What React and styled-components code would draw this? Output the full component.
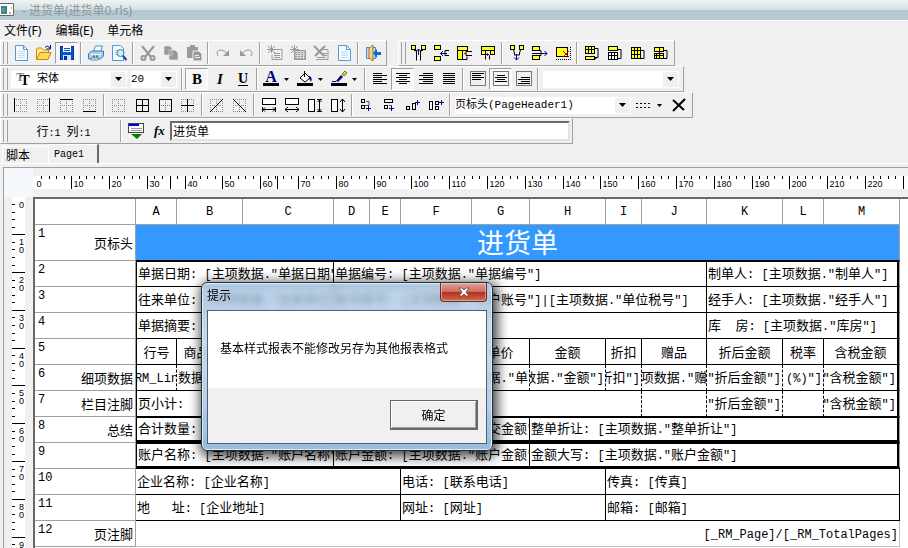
import React from "react";
import styled, { createGlobalStyle, css } from "styled-components";

const GlobalStyle = createGlobalStyle`
  * { box-sizing: border-box; }
  body {
    margin: 0;
    overflow: hidden;
    background: #f0f0f0;
    color: #000;
    font-family: "Noto Sans", "Noto Sans CJK SC", sans-serif;
    font-size: 12px;
  }
  button, select, input { font: inherit; color: inherit; }
`;

const MONO = `"Liberation Mono", "Noto Sans CJK SC", monospace`;
const MM = 3.7795;

// half-width characters sit on a narrower grid than the chinese ones
const Mixed = ({ children }) =>
  String(children)
    .split(/([\x20-\x7e]+)/)
    .map((part, i) => (i % 2 ? <Latin key={i}>{part}</Latin> : part));

const line = (d, color = "#000", w = 1) => (
  <path d={d} stroke={color} strokeWidth={w} fill="none" />
);
const rect = (x, y, w, h, fill = "none", stroke = "#000") => (
  <rect x={x + 0.5} y={y + 0.5} width={w - 1} height={h - 1} fill={fill} stroke={stroke} />
);

const dots = "M1.5 2v13M7.5 2v13M13.5 2v13M1 2.5h13M1 8.5h13M1 14.5h13";
const DotGrid = () => (
  <path d={dots} stroke="#8a8a8a" strokeDasharray="1 1" fill="none" />
);
const letter = (text, style) => (
  <text x="8" y="13" textAnchor="middle" fontFamily="Liberation Serif" fontSize="15" fontWeight="bold" {...style}>
    {text}
  </text>
);
const hlines = (rows) => line(rows.map(([x, y, w]) => `M${x} ${y}.5h${w}`).join(""));
const yellow = "#ffff20";

const ICONS = {
  new: (
    <>
      <path d="M2.500 .5h8l4 4v11h-12z" fill="#f4faff" stroke="#5599cf" />
      {line("M10.500 .5v4h4", "#5599cf")}
      {line("M5 6.500h7M5 8.500h7M5 10.500h7M5 12.500h7", "#c4dcf0")}
    </>
  ),
  open: (
    <>
      <path d="M.5 14V4l1-1h4l2 2h5v3" fill="#ffe895" stroke="#c88a00" />
      <path d="M.5 14.500 4 7.500h11l-3 7z" fill="#ffd95c" stroke="#c88a00" />
      {line("M9 2.500q3-3 5 1M14.500 0v4h-4", "#000080")}
    </>
  ),
  save: (
    <>
      {rect(1, 1, 14, 14, "#0754c9", "#002a99")}
      <path d="M4 1h8v6H4z" fill="#fff" />
      {line("M5 3.500h6M5 5.500h6", "#0754c9")}
      <path d="M4 10h8v5H4z" fill="#d0e2ff" />
      <path d="M5 11h3v4H5z" fill="#002a99" />
    </>
  ),
  print: (
    <>
      <path d="m5.500 6 2-5h7l-2 6z" fill="#f8fcff" stroke="#4b91c8" />
      <path d="m.5 9 3-3h12v5l-3 3h-12z" fill="#a8d0ef" stroke="#3b7db5" />
      {line("M3 9.500h10", "#fff")}
      {line("M5 11.500h2", "#d33", 2)}
      {line("M8 11.500h2", "#2a2", 2)}
      <path d="M3 13h8l-1 2H3z" fill="#fff" stroke="#4b91c8" />
    </>
  ),
  preview: (
    <>
      <path d="M1.500 .5h8l3 3v12h-11z" fill="#f4faff" stroke="#5599cf" />
      {line("M4 5.500h6M4 7.500h3M4 9.500h3", "#b4cfe6")}
      <circle cx="9.500" cy="8" r="3.500" fill="#c9efff" stroke="#46779b" />
      {line("m12 11 3.500 4", "#12439a", 2)}
    </>
  ),
  cut: (
    <>
      {line("M2 1l9 11M14 1L5 12", "#999", 2)}
      <circle cx="3.500" cy="13" r="2" fill="none" stroke="#999" strokeWidth="2" />
      <circle cx="12.500" cy="13" r="2" fill="none" stroke="#999" strokeWidth="2" />
    </>
  ),
  copy: <path d="M1 1h6l2 2v7H1zM6 5h6l3 3v7H6z" fill="#999" stroke="#eee" strokeWidth=".6" />,
  paste: (
    <>
      <path d="M1 2h3V0h5v2h3v11H1z" fill="#999" />
      <path d="M7 6h6l3 3v7H7z" fill="#999" stroke="#f0f0f0" />
      {line("M9 10.500h4M9 12.500h5", "#eee")}
    </>
  ),
  redo: (
    <>
      {line("M3 11q-3-6 3-6 4 0 6 4", "#999")}
      <path d="M14 5v6H8z" fill="#999" />
    </>
  ),
  undo: (
    <>
      {line("M13 11q3-6-3-6-4 0-6 4", "#999")}
      <path d="M2 5v6h6z" fill="#999" />
    </>
  ),
  band: (
    <>
      {line("M4.500 0v8M0 4.500h9M1 1l7 7M8 1L1 8", "#999")}
      {line("M9 4.500h6v10H5v-5M7 8.500h6M7 10.500h6M7 12.500h6", "#999")}
    </>
  ),
  bandGrid: (
    <>
      {line("M4.500 0v8M0 4.500h9M1 1l7 7M8 1L1 8", "#999")}
      {rect(4, 5, 12, 10, "#d8d8d8", "#999")}
      <path d="M5 7.500h10M5 9.500h10M5 11.500h10M5 13.500h10" stroke="#999" strokeDasharray="2 1" />
    </>
  ),
  bandDelete: (
    <>
      {line("M1 1l10 10M12 1L2 11", "#999", 2)}
      {line("M9 4.500h6v10H3M9 8.500h5M9 10.500h5M4 12.500h9", "#999")}
    </>
  ),
  exit: (
    <>
      <path d="M1.500 2.500h9v11h-9z" fill="#c3dcf3" stroke="#5586b8" />
      <path d="m4 3 4-3v16l-4-3z" fill="#f5d48a" stroke="#9b7330" />
      <path d="m8 8 4-4v3h4v3h-4v3z" fill="#0868dc" />
    </>
  ),
  colLeft: (
    <>
      {rect(0, 0, 5, 5, yellow)}
      {rect(10, 0, 5, 5, yellow)}
      {line("M3 5.500h2.500v10M12 5.500H9.500v10")}
      {line("M7.500 4v6M5 6.500l2.500-2.500 2.500 2.500", "#000080")}
    </>
  ),
  rowTop: (
    <>
      {rect(0, 0, 7, 5, yellow)}
      {rect(0, 11, 7, 5, yellow)}
      {line("M15 5.500h-4v5h4")}
      {line("M6 8.500h7M9 6L6.500 8.500 9 11", "#000080")}
    </>
  ),
  colIn: (
    <>
      {rect(0, 1, 11, 5, yellow)}
      {rect(0, 5, 6, 10, yellow)}
      {line("M6 14.500h4v-3M15 6.500H9v4h6")}
      {line("M9 8.500H7", "#c00")}
    </>
  ),
  rowIn: (
    <>
      {rect(1, 1, 14, 5, yellow)}
      {rect(1, 5, 5, 5, yellow)}
      {rect(10, 5, 5, 5, yellow)}
      {line("M5.500 14.500v-4l2-2 2 2v4")}
      {line("M7.500 9v2", "#c00")}
    </>
  ),
  colAdd: (
    <>
      {rect(1, 0, 5, 5, yellow)}
      {rect(10, 0, 5, 5, yellow)}
      {line("M4.500 5l1 3v2h5V8l1-3")}
      {line("M7.500 9v6M5 12.500l2.500 2.500 2.500-2.500", "#000080")}
    </>
  ),
  rowAdd: (
    <>
      {rect(0, 1, 8, 5, yellow)}
      {rect(0, 10, 8, 5, yellow)}
      {line("M7 5.500h2v5H7M0 8.500h9")}
      {line("M9 8.500h6M12.500 6l2.500 2.500-2.500 2.500", "#000080")}
    </>
  ),
  areaDelete: (
    <>
      {rect(1, 2, 12, 10, yellow)}
      {line("M8 6l6 6M14 6l-6 6", "#e00000")}
      <path d="M1 14.500h14M15.500 2v13" stroke="#000" strokeDasharray="1 1" />
    </>
  ),
  merge: (
    <>
      {rect(1, 1, 10, 8, yellow)}
      {line("M4.500 1v7M7.500 1v7M1 4.500h9")}
      {rect(1, 11, 10, 4, yellow)}
      {line("M11 3.500h3v9h-3M14 12l-3 2")}
    </>
  ),
  split: (
    <>
      {rect(1, 1, 10, 5, yellow)}
      {rect(1, 7, 10, 8, "#fff")}
      {line("M4.500 7v8M7.500 7v8M1 10.500h10M11 4.500h3v9h-3")}
    </>
  ),
  mergeCols: (
    <>
      {rect(1, 2, 10, 12, yellow)}
      {line("M4.500 2v12M7.500 2v12M1 5.500h10M1 9.500h10M11 5.500h3v8h-3")}
    </>
  ),
  mergeRows: (
    <>
      {rect(1, 2, 10, 5, yellow)}
      {rect(1, 8, 10, 6, yellow)}
      {line("M6.500 2v12M3.500 8v6M1 10.500h10M11 5.500h3v8h-3")}
    </>
  ),
  bold: letter("B"),
  italic: letter("I", { fontStyle: "italic" }),
  underline: (
    <>
      {letter("U", { y: 12, fontSize: 14 })}
      {line("M3 14.500h10")}
    </>
  ),
  fontColor: (
    <>
      {letter("A", { y: 11, fill: "#000080", fontSize: 16 })}
      <path d="M0 12h16v3H0z" />
    </>
  ),
  fillColor: (
    <>
      <path d="m3 7 5-5 5 5-5 4z" fill="#fff" stroke="#000" />
      <path d="M12 5q4 1 2 6l-2-4z" fill="#000080" />
      {line("M7.500 6V0")}
      <path d="M0 12h16v3H0z" />
    </>
  ),
  lineColor: (
    <>
      <path d="m5 10 5-6 2 2-5 5z" fill="#000080" />
      <path d="m11 3 3-3 2 2-3 3z" fill="#e8d800" stroke="#000" strokeWidth=".5" />
      {line("M1 10.500h4", "#000080")}
      <path d="M0 12h16v3H0z" />
    </>
  ),
  alignLeft: hlines([[1, 2, 9], [1, 4, 14], [1, 6, 9], [1, 8, 14], [1, 10, 9], [1, 12, 14]]),
  alignCenter: hlines([[1, 2, 14], [4, 4, 8], [1, 6, 14], [4, 8, 8], [1, 10, 14], [4, 12, 8]]),
  alignRight: hlines([[5, 2, 10], [1, 4, 14], [5, 6, 10], [1, 8, 14], [5, 10, 10], [1, 12, 14]]),
  justify: hlines([[2, 2, 12], [2, 4, 12], [2, 6, 12], [2, 8, 12], [2, 10, 12], [2, 12, 12]]),
  vTop: (
    <>
      {rect(0, 0, 16, 15, "none", "#777")}
      {hlines([[2, 2, 12], [2, 4, 9], [2, 6, 12], [2, 8, 9]])}
    </>
  ),
  vMiddle: (
    <>
      {rect(0, 0, 16, 15, "none", "#777")}
      {hlines([[4, 4, 8], [2, 6, 12], [4, 8, 8], [2, 10, 12]])}
    </>
  ),
  vBottom: (
    <>
      {rect(0, 0, 16, 15, "none", "#777")}
      {hlines([[5, 6, 9], [2, 8, 12], [5, 10, 9], [2, 12, 12]])}
    </>
  ),
  gridLeft: <><DotGrid />{line("M1.500 1v14")}</>,
  gridRight: <><DotGrid />{line("M13.500 1v14")}</>,
  gridTop: <><DotGrid />{line("M1 2.500h13")}</>,
  gridBottom: <><DotGrid />{line("M1 14.500h13")}</>,
  gridNone: <DotGrid />,
  gridAll: <>{rect(2, 2, 13, 13)}{line("M8.500 2v13M2 8.500h13")}</>,
  gridBox: <>{rect(2, 2, 13, 13)}<path d="M8.500 4v9M4 8.500h9" stroke="#777" strokeDasharray="1 1" /></>,
  gridCross: <><DotGrid />{line("M7.500 2v13M1 8.500h13")}</>,
  slashUp: <><DotGrid />{line("M1 15L14 2")}</>,
  slashDown: <><DotGrid />{line("M1 2l13 13")}</>,
  sameWidth: (
    <>
      {rect(1, 1, 14, 7, "#fff")}
      {line("M1.500 10v5M14.500 10v5M2 12.500h12M4 10.500l-2 2 2 2M12 10.500l2 2-2 2")}
    </>
  ),
  fitWidth: (
    <>
      {rect(1, 1, 14, 7, "#fff")}
      {line("M1 12.500h14M4 10l-3 2.500 3 2.500M12 10l3 2.500-3 2.500")}
    </>
  ),
  sameHeight: (
    <>
      {rect(1, 2, 7, 13, "#fff")}
      {line("M10 2.500h5M10 14.500h5M12.500 3v11M10.500 5l2-2 2 2M10.500 12l2 2 2-2")}
    </>
  ),
  fitHeight: (
    <>
      {rect(1, 2, 7, 13, "#fff")}
      {line("M12.500 2v13M10 5l2.500-3 2.500 3M10 12l2.500 3 2.500-3")}
    </>
  ),
  spaceDown: (
    <>
      {rect(2, 2, 4, 4)}
      {rect(2, 8, 4, 4)}
      {line("M7 4.500h3v4H6", "#555")}
      {line("M9.500 9v5M7 11.500h5", "#000080")}
    </>
  ),
  spaceOut: (
    <>
      {rect(2, 2, 9, 4)}
      {rect(2, 8, 4, 4)}
      {line("M7 8.500h3", "#555")}
      {line("M9.500 9v5M7 11.500h5", "#000080")}
    </>
  ),
  spaceUp: (
    <>
      {rect(1, 9, 4, 4)}
      {rect(7, 6, 4, 7)}
      {line("M12.500 3v5M10 5.500h5", "#000080")}
    </>
  ),
  spaceIn: (
    <>
      {rect(1, 4, 4, 9)}
      {rect(7, 4, 4, 4)}
      {rect(7, 9, 4, 4)}
      {line("M13.500 3v5M11 5.500h5", "#000080")}
    </>
  ),
  close: line("M2 3l11 10M14 2L2 14", "#000", 2),
  dash: <path d="M0 6.500h16M0 10.500h16" stroke="#000" strokeDasharray="2 2" />,
  data: (
    <>
      {rect(0, 0, 16, 10, "#fff", "#444")}
      <path d="M1 1h10v2H1z" fill="#0000e0" />
      {line("M3 5.500h11M3 7.500h11", "#999")}
      <path d="M3 11h11l-5 5z" fill="#008000" />
    </>
  ),
  fx: (
    <text x="3" y="12" fontFamily="Liberation Serif" fontSize="13" fontWeight="bold" fontStyle="italic">
      fx
    </text>
  ),
  font: (
    <>
      {letter("T", { x: 5, y: 10, fontSize: 12, fill: "#888" })}
      {letter("T", { x: 10, y: 14, fontSize: 14 })}
    </>
  ),
};

const Icon = ({ name }) => (
  <IconSvg viewBox="0 0 16 16" aria-hidden="true">
    {ICONS[name]}
  </IconSvg>
);

const Arrow = () => (
  <ArrowSvg viewBox="0 0 7 4" aria-hidden="true">
    <path d="M0 0h7L3.500 4z" />
  </ArrowSvg>
);

const Tools = ({ groups, pressed = [] }) =>
  groups.map((group, i) => (
    <React.Fragment key={i}>
      {i > 0 && <Separator />}
      {group.map((name) => (
        <ToolButton key={name} type="button" aria-label={name} $pressed={pressed.includes(name)}>
          <Icon name={name} />
        </ToolButton>
      ))}
    </React.Fragment>
  ));

const Combo = ({ label, value, width, icon }) => (
  <ComboBox $width={width}>
    {icon && <Icon name={icon} />}
    <ComboSelect aria-label={label} defaultValue={value}>
      <option>{value}</option>
    </ComboSelect>
    <ComboArrow>
      <Arrow />
    </ComboArrow>
  </ComboBox>
);

const range = (n) => Array.from({ length: n }, (_, i) => i);

const TopRuler = () => (
  <TopRulerSvg aria-hidden="true">
    {range(116).map((i) => {
      const x = Math.floor(1 + i * 2 * MM) + 0.5;
      const major = i % 5 === 0;
      return (
        <g key={i}>
          {i > 0 && <path d={`M${x} 0v${major ? 13 : 3}`} stroke="#000" />}
          {major && i < 115 && <text x={x + 2} y="11">{i * 2}</text>}
        </g>
      );
    })}
    <path d="M137.500 0v13M244.500 0v13" stroke="#000" />
  </TopRulerSvg>
);

const LeftRuler = () => (
  <LeftRulerSvg aria-hidden="true">
    {range(48).map((i) => {
      const y = Math.floor(i * 2 * MM) + 0.5;
      const major = i % 5 === 0;
      const digits = String(i * 2).split("").slice(0, i === 45 ? 1 : 2);
      return (
        <g key={i}>
          {i > 0 && <path d={`M0 ${y}h${major ? 13 : 3}`} stroke="#000" />}
          {major &&
            digits.map((digit, n) => (
              <text key={n} x="7" y={y + 10 + n * 8}>{digit}</text>
            ))}
        </g>
      );
    })}
  </LeftRulerSvg>
);

const COLUMNS = [
  ["A", 41], ["B", 66], ["C", 91], ["D", 36], ["E", 31], ["F", 71], ["G", 58],
  ["H", 76], ["I", 36], ["J", 65], ["K", 76], ["L", 41], ["M", 76],
];

const field = (title, name = title) => `${title}: [主项数据."${name}"]`;
// the left groups are narrower than the whole expression
const cutField = (title) => `${title}: [主项数据."${title}"`;
const center = (text, span = 1) => ({ text, span, align: "center" });
const dashed = (text, align = "center", span = 1) => ({ text, span, align, dashed: true });

const ROWS = [
  { name: "页标头", title: "进货单" },
  { framed: true, top: 1, cells: [{ text: cutField("单据日期"), span: 3 }, { text: field("单据编号"), span: 7 }, { text: field("制单人"), span: 3 }] },
  {
    framed: true,
    cells: [
      { text: cutField("往来单位"), span: 3 },
      { text: `${field("账号税号", "开户账号")}|[主项数据."单位税号"]`, span: 7 },
      { text: field("经手人"), span: 3 },
    ],
  },
  { framed: true, cells: [{ text: field("单据摘要"), span: 10 }, { text: field("库  房", "库房"), span: 3 }] },
  {
    framed: true,
    cells: ["行号", "商品编号", "商品名称", "规格", "", "数量", "单价", "金额", "折扣", "赠品", "折后金额", "税率", "含税金额"].map((t) => center(t)),
  },
  {
    framed: true,
    name: "细项数据",
    cells: [
      dashed("RM_Lin"),
      dashed('数据."商', "flex-start"),
      dashed('数据."商品'),
      dashed(""),
      dashed(""),
      dashed('数据."'),
      dashed('据."单', "flex-end"),
      dashed('数据."金额"]', "flex-end"),
      dashed('折扣"]', "flex-end"),
      dashed('项数据."赠'),
      dashed('"折后金额"]', "flex-end"),
      dashed('(%)"]', "flex-end"),
      dashed('"含税金额"]', "flex-end"),
    ],
  },
  {
    framed: true,
    name: "栏目注脚",
    bottom: 1,
    cells: [
      dashed("页小计:", "flex-start", 9),
      dashed(""),
      dashed('"折后金额"]', "flex-end"),
      dashed(""),
      dashed('"含税金额"]', "flex-end"),
    ],
  },
  { framed: true, name: "总结", top: 1, bottom: 3, cells: [{ text: cutField("合计数量"), span: 3 }, { text: cutField("成交金额"), span: 4 }, { text: field("整单折让"), span: 6 }] },
  { framed: true, top: 1, bottom: 3, cells: [{ text: cutField("账户名称"), span: 3 }, { text: cutField("账户金额"), span: 4 }, { text: field("金额大写", "账户金额"), span: 6 }] },
  { cells: [{ text: "企业名称: [企业名称]", span: 5 }, { text: "电话: [联系电话]", span: 3 }, { text: "传真: [传真]", span: 5 }] },
  { cells: [{ text: "地   址: [企业地址]", span: 5 }, { text: "网址: [网址]", span: 3 }, { text: "邮箱: [邮箱]", span: 5 }] },
  { name: "页注脚", plain: true, cells: [{ text: "[_RM_Page]/[_RM_TotalPages]", span: 13, align: "flex-end" }] },
];

const ReportTable = () => (
  <Sheet>
    <colgroup>
      <col style={{ width: 101 }} />
      {COLUMNS.map(([name, width]) => (
        <col key={name} style={{ width }} />
      ))}
    </colgroup>
    <thead>
      <tr>
        <HeadCell aria-label="行" />
        {COLUMNS.map(([name]) => (
          <HeadCell key={name}>{name}</HeadCell>
        ))}
      </tr>
    </thead>
    <tbody>
      {ROWS.map((row, i) => (
        <tr key={i}>
          <RowHead scope="row">
            <RowLabel $tall={!!row.title}>
              <RowNumber>{i + 1}</RowNumber>
              <span>{row.name}</span>
            </RowLabel>
          </RowHead>
          {row.title ? (
            <TitleCell colSpan={13}>{row.title}</TitleCell>
          ) : (
            row.cells.map((cell, n) => {
              const last = n === row.cells.length - 1;
              return (
                <Cell
                  key={n}
                  colSpan={cell.span}
                  $row={row}
                  $dashed={cell.dashed}
                  $first={n === 0}
                  $last={last}
                >
                  <CellText
                    $align={cell.align}
                    $frame={row.framed && last}
                    $height={26 - (row.top || 0) - (row.bottom || 1)}
                  >
                    <span><Mixed>{cell.text}</Mixed></span>
                  </CellText>
                </Cell>
              );
            })
          )}
        </tr>
      ))}
    </tbody>
  </Sheet>
);

const MessageDialog = () => (
  <Dialog role="dialog" aria-labelledby="dialog-title">
    <DialogBar>
      <span id="dialog-title">提示</span>
      <CloseButton type="button" aria-label="关闭">
        <svg width="12" height="10" viewBox="0 0 12 10" aria-hidden="true">
          <path d="M1 1h3l2 2 2-2h3L8 5l3 4H8L6 7 4 9H1l3-4z" fill="#fff" stroke="#58413f" strokeWidth=".8" />
        </svg>
      </CloseButton>
    </DialogBar>
    <DialogBody>
      <Message>基本样式报表不能修改另存为其他报表格式</Message>
      <DialogFooter>
        <OkButton type="button">确定</OkButton>
      </DialogFooter>
    </DialogBody>
  </Dialog>
);

const App = () => {
  return (
    <>
      <GlobalStyle />
      <Window>
        <TitleBar>
          <svg width="14" height="14" viewBox="0 0 14 14" aria-hidden="true">
            <path d="M-2 .5h15.500v12H-2z" fill="#fff" stroke="#666" />
            <path d="M1 3h6v8H1z" fill="#3b8a78" />
            <path d="M2 5h3v4H2z" fill="#5c8fc9" />
            <path d="M9 10h2M11 5h1" stroke="#555" />
          </svg>
          <span>- 进货单(进货单0.rls)</span>
        </TitleBar>
        <MenuBar>
          <MenuItem type="button">文件(F)</MenuItem>
          <MenuItem type="button">编辑(E)</MenuItem>
          <MenuItem type="button">单元格</MenuItem>
        </MenuBar>

        <ToolRow>
          <Toolbar>
            <Grip />
            <Tools
              pressed={["save"]}
              groups={[
                ["new", "open", "save"],
                ["print", "preview"],
                ["cut", "copy", "paste"],
                ["redo", "undo"],
                ["band", "bandGrid", "bandDelete", "new"],
                ["exit"],
              ]}
            />
          </Toolbar>
          <Toolbar>
            <Grip />
            <Tools
              groups={[
                ["colLeft", "rowTop", "colIn", "rowIn"],
                ["colAdd", "rowAdd", "areaDelete"],
                ["merge", "split", "mergeCols", "mergeRows"],
              ]}
            />
          </Toolbar>
        </ToolRow>

        <ToolRow>
          <Toolbar>
            <Grip />
            <Fields>
              <Combo label="字体" value="宋体" width={116} icon="font" />
              <Combo label="字号" value="20" width={46} />
            </Fields>
            <Separator />
            <Tools groups={[["bold", "italic", "underline"]]} pressed={["bold"]} />
            <Separator />
            {["fontColor", "fillColor", "lineColor"].map((name) => (
              <DropButton key={name} type="button" aria-label={name}>
                <Icon name={name} />
                <Arrow />
              </DropButton>
            ))}
            <Separator />
            <Tools
              pressed={["alignCenter", "vMiddle"]}
              groups={[
                ["alignLeft", "alignCenter", "alignRight", "justify"],
                ["vTop", "vMiddle", "vBottom"],
              ]}
            />
            <Separator />
            <Fields>
              <Combo label="样式" value="" width={136} />
            </Fields>
          </Toolbar>
        </ToolRow>

        <ToolRow>
          <Toolbar>
            <Grip />
            <Tools
              groups={[
                ["gridLeft", "gridRight", "gridTop", "gridBottom"],
                ["gridNone", "gridAll", "gridBox", "gridCross"],
                ["slashUp", "slashDown"],
                ["sameWidth", "fitWidth", "sameHeight", "fitHeight"],
                ["spaceDown", "spaceOut", "spaceUp", "spaceIn"],
              ]}
            />
            <Separator />
            <Fields>
              <Combo label="对象" value="页标头(PageHeader1)" width={176} />
            </Fields>
            <DropButton type="button" aria-label="dash">
              <Icon name="dash" />
              <Arrow />
            </DropButton>
            <Tools groups={[["close"]]} />
          </Toolbar>
        </ToolRow>

        <ToolRow>
          <Toolbar>
            <Grip />
            <Position><Mixed>行:1 列:1</Mixed></Position>
            <Separator />
            <Tools groups={[["data", "fx"]]} />
            <FormulaInput aria-label="内容" defaultValue="进货单" />
          </Toolbar>
        </ToolRow>

        <Tabs role="tablist">
          <Tab type="button" role="tab" aria-selected="false">脚本</Tab>
          <Tab type="button" role="tab" aria-selected="true" $active>
            <Mixed>Page1</Mixed>
          </Tab>
        </Tabs>

        <Designer>
          <Corner />
          <TopRulerBox><TopRuler /></TopRulerBox>
          <LeftRulerBox><LeftRuler /></LeftRulerBox>
          <Canvas>
            <ReportTable />
          </Canvas>
        </Designer>
        <MessageDialog />
      </Window>
    </>
  );
};

const Latin = styled.span`
  font-family: "Liberation Mono", monospace;
  font-size: var(--latin, 10px);
`;

const Window = styled.div`
  position: relative;
  display: flex;
  flex-direction: column;
  height: 100vh;
  overflow: hidden;
`;

const TitleBar = styled.header`
  display: flex;
  align-items: center;
  gap: 8px;
  height: 20px;
  flex-shrink: 0;
  color: #8f9698;
  background: linear-gradient(#eef4f5, #d3e0e4 50%, #b5c8cf 52%, #b8cad1);
`;

const MenuBar = styled.nav`
  display: flex;
  align-items: center;
  gap: 14px;
  height: 20px;
  flex-shrink: 0;
  padding-left: 4px;
  border-top: 1px solid #fff;
`;

const MenuItem = styled.button`
  padding: 0;
  border: 0;
  background: none;
  line-height: 18px;
`;

const ToolRow = styled.div`
  display: flex;
  gap: 11px;
  flex-shrink: 0;
`;

const Toolbar = styled.div`
  display: flex;
  align-items: center;
  height: 26px;
  padding: 0 2px;
  border: 1px solid #a0a0a0;
  border-top-color: #fff;
  border-left-color: #fff;
`;

const Grip = styled.span`
  width: 5px;
  height: 22px;
  margin-right: 1px;
  border: solid #a0a0a0;
  border-width: 0 1px;
`;

const Separator = styled.span`
  width: 2px;
  height: 22px;
  margin: 0 2px;
  border-left: 1px solid #a0a0a0;
  border-right: 1px solid #fff;
`;

const ToolButton = styled.button`
  display: grid;
  place-items: center;
  width: 23px;
  height: 22px;
  padding: 0;
  border: 1px solid transparent;
  background: none;
  ${({ $pressed }) =>
    $pressed &&
    css`
      border-color: #a0a0a0 #fff #fff #a0a0a0;
      background: #f7f7f7;
    `}
`;

const DropButton = styled.button`
  display: flex;
  align-items: center;
  gap: 5px;
  width: 34px;
  height: 22px;
  padding: 0 0 0 3px;
  border: 0;
  background: none;

  & > svg:last-child {
    width: 5px;
    height: 3px;
  }
`;

const IconSvg = styled.svg`
  width: 16px;
  height: 16px;
  flex-shrink: 0;
  overflow: visible;
`;

const ArrowSvg = styled.svg`
  width: 7px;
  height: 4px;
  flex-shrink: 0;
`;

const Fields = styled.div`
  display: flex;
  gap: 4px;
  padding: 0 2px;
`;

const ComboBox = styled.div`
  display: flex;
  align-items: center;
  width: ${({ $width }) => $width}px;
  height: 17px;
  background: #fff;

  & > ${IconSvg} {
    margin: 0 6px 0 4px;
  }
`;

const ComboSelect = styled.select`
  flex: 1;
  min-width: 0;
  padding: 0;
  border: 0;
  outline: 0;
  appearance: none;
  background: none;
  font-family: ${MONO};
  font-size: 11px;
  line-height: 16px;
`;

const ComboArrow = styled.span`
  display: grid;
  place-items: center;
  width: 15px;
  height: 15px;
  margin-right: 1px;
  background: #f0f0f0;
`;

const Position = styled.span`
  width: 109px;
  text-align: center;
`;

const FormulaInput = styled.input`
  width: 400px;
  height: 20px;
  padding: 0 1px;
  border: 2px solid #e3e3e3;
  border-top-color: #696969;
  border-left-color: #696969;
  outline: 0;
  background: #fff;
`;

const Tabs = styled.div`
  display: flex;
  align-items: flex-end;
  height: 20px;
  flex-shrink: 0;
  padding-left: 2px;
  border-bottom: 1px solid #fff;
`;

const Tab = styled.button`
  width: 46px;
  height: 17px;
  padding: 0 0 0 3px;
  border: 0;
  border-top: 1px solid #fff;
  border-left: 1px solid #fff;
  background: #f0f0f0;
  line-height: 15px;
  text-align: left;
  white-space: nowrap;
  ${({ $active }) =>
    $active &&
    css`
      width: 51px;
      height: 19px;
      padding: 0 0 2px 5px;
      border-right: 2px solid #696969;
    `}
`;

const Designer = styled.main`
  display: grid;
  grid-template-columns: 29px 1fr;
  grid-template-rows: 29px 1fr;
  flex: 1;
  min-height: 0;
  margin: 3px 0 0 3px;
  border-top: 1px solid #a0a0a0;
  border-left: 1px solid #a0a0a0;
`;

const Corner = styled.div`
  background: #f5f8fc;
`;

const TopRulerBox = styled.div`
  min-width: 0;
  padding-top: 8px;
  overflow: hidden;
`;

const TopRulerSvg = styled.svg`
  display: block;
  width: 100%;
  height: 13px;
  background: #fff;
  font-family: "Liberation Sans", sans-serif;
  font-size: 9px;
`;

const LeftRulerBox = styled.div`
  min-height: 0;
  padding-left: 8px;
  overflow: hidden;
`;

const LeftRulerSvg = styled.svg`
  display: block;
  width: 13px;
  height: 100%;
  background: #fff;
  font-family: "Liberation Sans", sans-serif;
  font-size: 9px;
`;

const Canvas = styled.div`
  min-width: 0;
  overflow: hidden;
  border-top: 2px solid #696969;
  border-left: 2px solid #696969;
  background: #fff;
`;

const Sheet = styled.table`
  --latin: 12px;
  table-layout: fixed;
  width: 865px;
  border-collapse: separate;
  border-spacing: 0;
  font-size: 13px;
  line-height: 16px;
`;

const HeadCell = styled.th`
  height: 26px;
  padding: 0;
  border: solid #a0a0a0;
  border-width: 0 1px 1px 0;
  font-family: "Liberation Mono", monospace;
  font-size: 12px;
  font-weight: normal;
`;

const RowHead = styled.th`
  padding: 0;
  border: solid #a0a0a0;
  border-width: 0 1px 1px 0;
  font-weight: normal;
`;

const RowLabel = styled.div`
  display: flex;
  align-items: center;
  justify-content: space-between;
  height: ${({ $tall }) => ($tall ? 35 : 25)}px;
  padding: 0 2px;
`;

const RowNumber = styled.span`
  align-self: flex-start;
  padding: 1px 0 0 1px;
  font-family: "Liberation Mono", monospace;
  font-size: 12px;
`;

const TitleCell = styled.td`
  height: 36px;
  padding: 0;
  border-bottom: 1px solid #000;
  border-right: 1px solid #a0a0a0;
  background: #3399ff;
  color: #fff;
  font-size: 27px;
  line-height: 30px;
  text-align: center;
`;

const Cell = styled.td`
  padding: 0;
  border-style: solid;
  border-color: #000;
  border-width: ${({ $row, $first }) =>
    `${$row.top || 0}px 1px ${$row.bottom || 1}px ${$first && $row.framed ? 1 : 0}px`};
  ${({ $dashed }) => $dashed && "border-right-style: dashed;"}
  ${({ $last, $row }) => $last && $row.framed && "border-right: 1px solid #a0a0a0;"}
  ${({ $row }) => $row.plain && "border-color: #c0c0c0;"}
`;

const CellText = styled.div`
  display: flex;
  align-items: center;
  justify-content: ${({ $align }) => $align || "flex-start"};
  height: ${({ $height }) => $height}px;
  padding: 0 1px;
  overflow: hidden;
  line-height: 20px;
  white-space: pre;
  ${({ $frame }) => $frame && "border-right: 2px solid #000;"}
`;

const Dialog = styled.section`
  position: absolute;
  top: 282px;
  left: 201px;
  width: 292px;
  padding: 0 5px 6px;
  border: 1px solid #20303c;
  border-radius: 6px;
  background: linear-gradient(rgba(160, 192, 224, 0.75), rgba(196, 217, 240, 0.8) 40%, rgba(152, 188, 222, 0.95));
  backdrop-filter: blur(3px);
  box-shadow: inset 0 0 0 1px #d8ebfa, 2px 3px 12px 3px rgba(0, 0, 0, 0.7);
`;

const DialogBar = styled.div`
  display: flex;
  justify-content: space-between;
  height: 27px;
  line-height: 26px;
`;

const CloseButton = styled.button`
  display: grid;
  place-items: center;
  width: 47px;
  height: 19px;
  padding: 0;
  border: 1px solid #6b2a25;
  border-top: 0;
  border-radius: 0 0 4px 4px;
  background: linear-gradient(#e0a198, #cf6d5d 48%, #b5301c 52%, #cf6a4e);
  box-shadow: inset 0 0 0 1px rgba(255, 255, 255, 0.4);
`;

const DialogBody = styled.div`
  border: 1px solid #50606e;
  background: #f0f0f0;
`;

const Message = styled.p`
  margin: 0;
  padding: 29px 12px 30px;
  background: #fff;
  line-height: 18px;
`;

const DialogFooter = styled.div`
  display: flex;
  justify-content: flex-end;
  padding: 12px 8px 13px;
`;

const OkButton = styled.button`
  width: 88px;
  height: 30px;
  padding: 0;
  border: 1px solid #696969;
  border-right-width: 2px;
  border-bottom-width: 2px;
  background: #f0f0f0;
  box-shadow: inset 1px 1px #fff, inset -1px -1px #a0a0a0;
`;

export default App;
